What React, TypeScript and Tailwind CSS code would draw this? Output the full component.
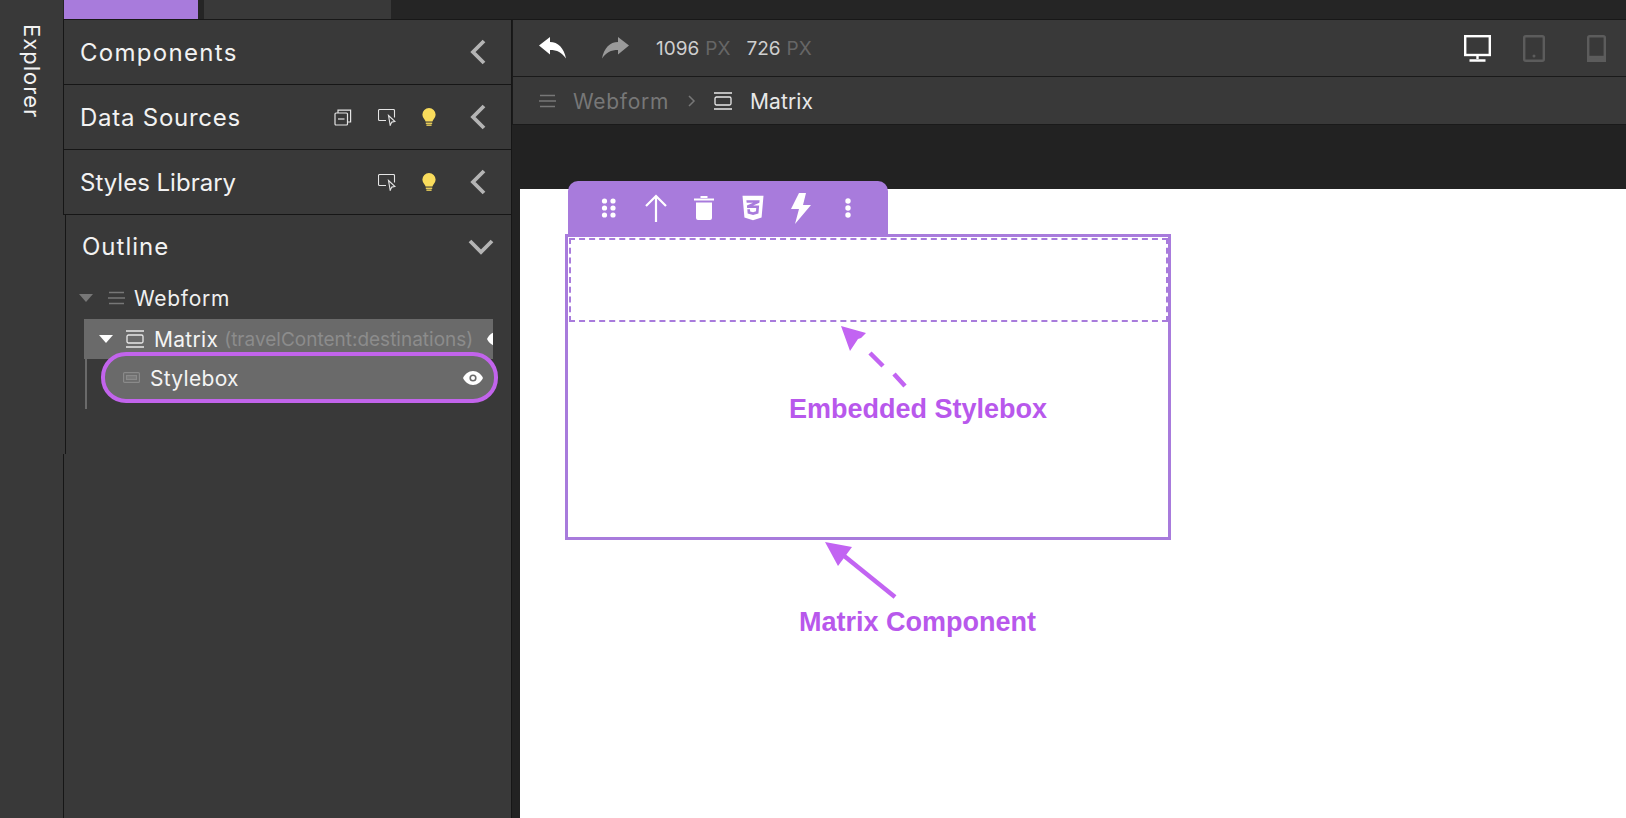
import { FaCss3Alt } from "react-icons/fa";

const panelFont = "font-['Inter','Noto_Sans',sans-serif]";

function Chevron({ down = false }: { down?: boolean }) {
  return (
    <svg width="26" height="26" viewBox="0 0 26 26" fill="none" stroke="#b4b4b4" strokeWidth="3.8" className="shrink-0">
      <path d={down ? "M2 8l11 11L24 8" : "M18 2L7 13l11 11"} />
    </svg>
  );
}

function Bulb() {
  return (
    <svg width="14" height="18" viewBox="0 0 14 18" fill="#f9dc5c">
      <path d="M7 0a6.600 6.600 0 0 0-6.600 6.600c0 2.700 1.600 4 2.600 5.600.3.5.5 1 .5 1.400h7c0-.4.2-.9.5-1.400 1-1.600 2.600-2.900 2.600-5.600A6.600 6.600 0 0 0 7 0z" />
      <rect x="3.800" y="14.600" width="6.400" height="1.300" />
      <rect x="4.400" y="16.500" width="5.200" height="1.300" />
    </svg>
  );
}

function CursorFrame() {
  return (
    <svg width="18" height="17" viewBox="0 0 18 17" fill="none" stroke="#e4e4e4" strokeWidth="1.100">
      <path d="M8 11.500H1.500a1 1 0 0 1-1-1V1.500a1 1 0 0 1 1-1h14a1 1 0 0 1 1 1v7" />
      <path d="M10.500 6.500l6.500 6-3.200.6-1.600 3.200z" />
    </svg>
  );
}

function Copies() {
  return (
    <svg width="18" height="17" viewBox="0 0 18 17" fill="none" stroke="#e4e4e4" strokeWidth="1.200">
      <rect x="1" y="4" width="12.500" height="12" rx="1" />
      <path d="M4 4V1.200h12.600v11.800h-3" />
      <path d="M4 10h6.500" />
    </svg>
  );
}

function Lines({ color, w = 17 }: { color: string; w?: number }) {
  return (
    <svg width={w} height="14" viewBox="0 0 17 14" fill="none" stroke={color} strokeWidth="1.300" className="shrink-0">
      <path d="M1 1.500h15M0 7h17M1 12.500h15" />
    </svg>
  );
}

function MatrixIcon({ color = "#e8e8e8" }: { color?: string }) {
  return (
    <svg width="18" height="18" viewBox="0 0 18 18" fill="none" stroke={color} strokeWidth="1.300" className="shrink-0">
      <path d="M0 1h18M0 17h18" />
      <rect x="1" y="5" width="16" height="8" rx="1.500" />
    </svg>
  );
}

function Eye({ className = "" }: { className?: string }) {
  return (
    <svg width="20" height="14" viewBox="0 0 20 14" className={className}>
      <path d="M10 0C5.500 0 2 3 0 7c2 4 5.500 7 10 7s8-3 10-7c-2-4-5.500-7-10-7z" fill="#fff" />
      <circle cx="10" cy="7" r="3.600" fill="#6a6a6a" />
      <circle cx="10" cy="7" r="2" fill="#fff" />
    </svg>
  );
}

function Caret({ color }: { color: string }) {
  return (
    <svg width="14" height="8" viewBox="0 0 14 8" fill={color} className="shrink-0">
      <path d="M0 0h14L7 8z" />
    </svg>
  );
}

function ReplyArrow({ color, flip = false }: { color: string; flip?: boolean }) {
  return (
    <svg width="27" height="22" viewBox="0 0 27 22" fill={color} className={flip ? "shrink-0 -scale-x-100" : "shrink-0"}>
      <path d="M0 8.500L11 0v5c8 0 14 6 16 16.500-4-6-9-8.500-16-8.500v4.500z" />
    </svg>
  );
}

function PanelRow({ title, tracking, children }: { title: string; tracking: string; children?: React.ReactNode }) {
  return (
    <div className="flex h-[65px] items-center border-b border-l border-r border-[#161616] pl-[16px] pr-[19px]">
      <span className={`flex-1 pt-[2px] text-[24px] text-[#f2f2f2] ${tracking}`}>{title}</span>
      {children}
      <Chevron />
    </div>
  );
}

export default function App() {
  return (
    <div className={`flex h-[818px] w-[1626px] overflow-hidden bg-[#222222] ${panelFont}`}>
      {/* Explorer rail */}
      <div className="flex w-[63px] shrink-0 justify-center bg-[#393939] pt-[24px]">
        <span className="h-fit text-[22px] leading-none tracking-[1px] text-[#f2f2f2] [writing-mode:vertical-rl]">Explorer</span>
      </div>

      <div className="flex min-w-0 flex-1 flex-col">
        {/* Top tabs */}
        <div className="flex h-[20px] shrink-0 border-b border-[#181818] bg-[#252525]">
          <div className="ml-px h-[19px] w-[134px] bg-[#a87bdc]" />
          <div className="ml-[6px] h-[19px] w-[187px] bg-[#393939]" />
        </div>

        <div className="flex min-h-0 flex-1">
          {/* Sidebar */}
          <div className="flex w-[449px] shrink-0 flex-col bg-[#393939]">
            <PanelRow title="Components" tracking="tracking-[1.300px]" />
            <PanelRow title="Data Sources" tracking="tracking-[0.750px]">
              <div className="mr-[30px] flex items-center gap-[26px]">
                <Copies />
                <CursorFrame />
                <Bulb />
              </div>
            </PanelRow>
            <PanelRow title="Styles Library" tracking="tracking-[0px]">
              <div className="mr-[30px] flex items-center gap-[26px]">
                <CursorFrame />
                <Bulb />
              </div>
            </PanelRow>

            {/* Outline */}
            <div className="ml-[2px] flex h-[239px] shrink-0 flex-col border-l border-r border-[#161616]">
              <div className="flex h-[62px] shrink-0 items-center pl-[16px] pr-[17px]">
                <span className="flex-1 pt-[2px] text-[24px] tracking-[1px] text-[#f2f2f2]">Outline</span>
                <Chevron down />
              </div>
              <div className="flex h-[42px] items-center pl-[13px]">
                <Caret color="#777777" />
                <span className="ml-[15px]"><Lines color="#777777" /></span>
                <span className="ml-[9px] pt-[2px] text-[21px] tracking-[0.7px] text-[#f0f0f0]">Webform</span>
              </div>
              <div className="relative ml-[18px] mr-[18px]">
                <div className="flex h-[40px] items-center overflow-hidden bg-[#6a6a6a] pl-[15px]">
                  <Caret color="#ffffff" />
                  <span className="ml-[13px]"><MatrixIcon /></span>
                  <span className="ml-[10px] pt-[2px] text-[21px] tracking-[0.3px] text-[#f4f4f4]">Matrix</span>
                  <span className="ml-[6px] whitespace-nowrap pt-[2px] text-[19px] text-[#8c8c8c]">(travelContent:destinations)</span>
                  <Eye className="ml-[14px] shrink-0" />
                </div>
                <div className="ml-px h-[50px] w-[2px] bg-[#6a6a6a]" />
                {/* Highlighted row */}
                <div className="absolute left-[17px] right-[-5px] top-[33px] flex h-[51px] items-center rounded-[25px] border-4 border-[#c264ec] bg-[#6a6a6a] pl-[18px] pr-[11px]">
                  <svg width="17" height="11" viewBox="0 0 17 11" fill="none" stroke="#8a8a8a" strokeWidth="1.200" className="shrink-0">
                    <rect x="0.600" y="0.600" width="15.800" height="9.800" rx="1" />
                    <rect x="3.500" y="3.500" width="10" height="4" fill="#8a8a8a" fillOpacity="0.5" />
                  </svg>
                  <span className="ml-[10px] flex-1 pt-[2px] text-[21px] tracking-[0.3px] text-[#f4f4f4]">Stylebox</span>
                  <Eye />
                </div>
              </div>
            </div>
            <div className="flex-1 border-l border-r border-[#161616]" />
          </div>

          {/* Editor */}
          <div className="flex min-w-0 flex-1 flex-col">
            <div className="flex h-[57px] shrink-0 items-center border-b border-l border-[#1a1a1a] bg-[#393939] pl-[26px] pr-[20px]">
              <ReplyArrow color="#ffffff" />
              <span className="ml-[36px]"><ReplyArrow color="#9a9a9a" flip /></span>
              <span className="ml-[27px] pt-[2px] text-[19px] text-[#cfcfcf]">1096</span>
              <span className="ml-[6px] pt-[2px] text-[19px] text-[#666666]">PX</span>
              <span className="ml-[16px] pt-[2px] text-[19px] text-[#cfcfcf]">726</span>
              <span className="ml-[6px] pt-[2px] text-[19px] text-[#666666]">PX</span>
              <div className="ml-auto flex items-center">
                <svg width="27" height="27" viewBox="0 0 27 27" fill="none" stroke="#ffffff" strokeWidth="2.400">
                  <rect x="1.200" y="1.200" width="24.600" height="18.800" />
                  <path d="M13.500 20v4M5.500 25.500h16" />
                </svg>
                <svg width="22" height="27" viewBox="0 0 22 27" fill="none" stroke="#5c5c5c" strokeWidth="2.400" className="ml-[32px]">
                  <rect x="1.200" y="1.200" width="19.600" height="24.600" rx="1.500" />
                  <circle cx="11" cy="21" r="1.500" fill="#5c5c5c" stroke="none" />
                </svg>
                <svg width="19" height="27" viewBox="0 0 19 27" fill="none" stroke="#5c5c5c" strokeWidth="2.400" className="ml-[42px]">
                  <rect x="1.200" y="1.200" width="16.600" height="24.600" rx="1.500" />
                  <rect x="1.200" y="22" width="16.600" height="3.800" fill="#5c5c5c" />
                </svg>
              </div>
            </div>

            <div className="flex h-[48px] shrink-0 items-center border-b border-l border-[#1a1a1a] bg-[#393939] pl-[26px]">
              <Lines color="#777777" />
              <span className="ml-[17px] pt-[2px] text-[21px] tracking-[0.7px] text-[#777777]">Webform</span>
              <svg width="8" height="12" viewBox="0 0 8 12" fill="none" stroke="#777777" strokeWidth="1.500" className="ml-[19px]">
                <path d="M1 1l5 5-5 5" />
              </svg>
              <span className="ml-[18px]"><MatrixIcon /></span>
              <span className="ml-[18px] pt-[2px] text-[21px] tracking-[0.1px] text-[#e8e8e8]">Matrix</span>
            </div>

            {/* Canvas */}
            <div className="relative mt-[64px] ml-[8px] flex-1 bg-white pl-[45px]">
              <div className="-mt-[8px] ml-[3px] flex h-[53px] w-[320px] items-center rounded-t-[10px] bg-[#a87bdc] pl-[33px]">
                <svg width="16" height="20" viewBox="0 0 16 20" fill="#fff" className="shrink-0">
                  <circle cx="3.500" cy="3" r="2.600" /><circle cx="12" cy="3" r="2.600" />
                  <circle cx="3.500" cy="10" r="2.600" /><circle cx="12" cy="10" r="2.600" />
                  <circle cx="3.500" cy="17" r="2.600" /><circle cx="12" cy="17" r="2.600" />
                </svg>
                <svg width="24" height="28" viewBox="0 0 24 28" fill="none" stroke="#fff" strokeWidth="2.200" className="ml-[27px] shrink-0">
                  <path d="M12 28V2M2 12L12 2l10 10" />
                </svg>
                <svg width="20" height="24" viewBox="0 0 20 24" fill="#fff" className="ml-[26px] shrink-0">
                  <path d="M0 2.500h20v2H0zM6.500 0h7v2h-7zM2 6.500h16V22a2 2 0 0 1-2 2H4a2 2 0 0 1-2-2z" />
                </svg>
                <FaCss3Alt className="ml-[28px] h-[28px] w-[22px] shrink-0 text-white" />
                <svg width="20" height="32" viewBox="0 0 20 32" fill="#fff" className="ml-[27px] shrink-0">
                  <path d="M8 1h7l-3 12h8L4 32l4-15H0z" />
                </svg>
                <svg width="6" height="20" viewBox="0 0 6 20" fill="#fff" className="ml-[34px] shrink-0">
                  <circle cx="3" cy="3" r="2.700" /><circle cx="3" cy="10" r="2.700" /><circle cx="3" cy="17" r="2.700" />
                </svg>
              </div>

              <div className="h-[306px] w-[606px] border-[3px] border-[#a87bdc] pl-px pt-px">
                <div className="h-[84px] w-[599px] border-2 border-dashed border-[#a87bdc]" />
              </div>

              {/* Annotations */}
              <svg className="absolute left-[-520px] top-[-189px] h-[818px] w-[1626px]" viewBox="0 0 1626 818" fill="#c264f2" stroke="none">
                <path d="M841 326l25 7-5 5-3 1-2 3-6 9z" />
                <path d="M870 353l13 13M894 374l11 12" stroke="#c264f2" strokeWidth="4.500" fill="none" />
                <path d="M825 542l27 5-14 19z" />
                <path d="M843 555l52 42" stroke="#c264f2" strokeWidth="4.500" fill="none" />
              </svg>
              <span className="absolute left-[269px] top-[205px] whitespace-nowrap font-['Liberation_Sans',Arial,sans-serif] text-[27px] font-bold leading-[30px] text-[#b858ec]">Embedded Stylebox</span>
              <span className="absolute left-[279px] top-[418px] whitespace-nowrap font-['Liberation_Sans',Arial,sans-serif] text-[27px] font-bold leading-[30px] text-[#b858ec]">Matrix Component</span>
            </div>
          </div>
        </div>
      </div>
    </div>
  );
}
